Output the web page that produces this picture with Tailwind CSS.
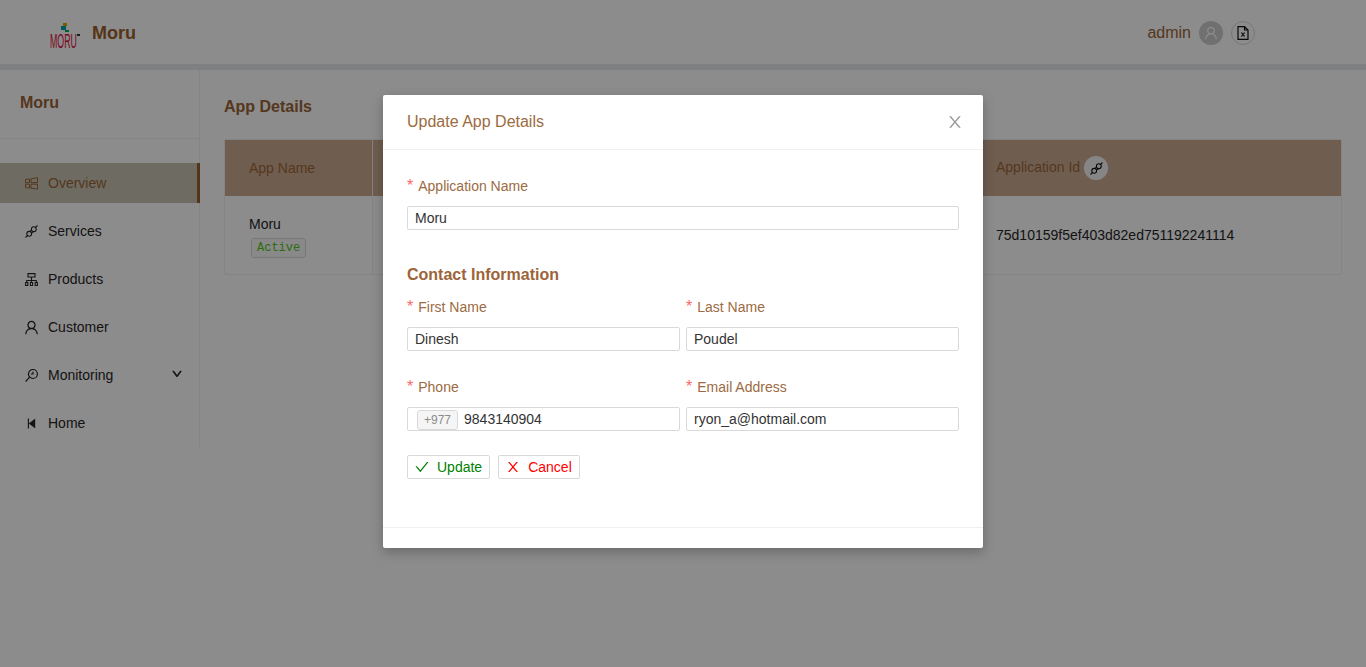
<!DOCTYPE html>
<html lang="en">
<head>
    <meta charset="UTF-8">
    <title>Moru - App Details</title>
    <script src="https://cdn.jsdelivr.net/npm/@tailwindcss/browser@4"></script>
</head>
<body class="bg-white font-['Liberation_Sans',sans-serif] text-sm text-[#262626]">
<div class="relative h-[667px] w-[1366px] overflow-hidden">

    <!-- header -->
    <header class="flex h-16 items-center pl-[50px] pr-[111px] pt-[2px]">
        <svg width="32" height="28" viewBox="0 0 32 28" class="mt-[21px] self-start">
            <rect x="13" y="0" width="4" height="3" fill="#d9a800"/>
            <rect x="11" y="3" width="5" height="4" fill="#00a0b0"/>
            <rect x="15" y="7" width="4" height="2" fill="#00b060"/>
            <text transform="translate(0 25) scale(.42 1)" font-family="Liberation Sans, sans-serif" font-size="21" fill="#e0103f">MORU</text>
            <rect x="27" y="11" width="3" height="2" fill="#333"/>
        </svg>
        <span class="ml-[10px] text-lg font-bold text-[#9c622a]">Moru</span>
        <div class="ml-auto flex items-center">
            <span class="text-base text-[#9c6438]">admin</span>
            <span class="ml-2 flex h-6 w-6 items-center justify-center rounded-full bg-[#ccc]">
                <svg width="14" height="14" viewBox="64 64 896 896" fill="#fff"><path d="M858.5 763.6a374 374 0 0 0-80.6-119.5 375.63 375.63 0 0 0-119.5-80.6c-.4-.2-.8-.3-1.2-.5C719.5 518 760 444.7 760 362c0-137-111-248-248-248S264 225 264 362c0 82.7 40.5 156 102.8 201.1-.4.2-.8.3-1.2.5-44.8 18.9-85 46-119.5 80.6a375.63 375.63 0 0 0-80.6 119.5A371.7 371.7 0 0 0 136 901.8a8 8 0 0 0 8 8.2h60c4.4 0 7.9-3.5 8-7.8 2-77.2 33-149.5 87.8-204.3 56.7-56.7 132-87.9 212.2-87.9s155.5 31.2 212.2 87.9C779 752.7 810 825 812 902.2c.1 4.4 3.6 7.8 8 7.8h60a8 8 0 0 0 8-8.2c-1-47.8-10.9-94.3-29.5-138.2zM512 534c-45.9 0-89.1-17.9-121.6-50.4S340 407.9 340 362c0-45.9 17.9-89.1 50.4-121.6S466.1 190 512 190s89.1 17.9 121.6 50.4S684 316.1 684 362c0 45.9-17.9 89.1-50.4 121.6S557.9 534 512 534z"/></svg>
            </span>
            <span class="ml-2 flex h-6 w-6 items-center justify-center rounded-full border border-[#d9d9d9]">
                <svg width="12" height="14" viewBox="0 0 12 14" fill="none" stroke="#111" stroke-width="1.2">
                    <path d="M1 .7h6.5L11 4v9.3H1z"/>
                    <path d="M7.5.7V4H11"/>
                    <path d="M4.4 6.5l3.2 4M7.6 6.5l-3.2 4"/>
                </svg>
            </span>
        </div>
    </header>
    <div class="h-[6px] bg-[#e7e9eb]"></div>

    <div class="flex">
        <!-- sidebar -->
        <aside class="h-[377px] w-[200px] shrink-0 border-r border-[#f0f0f0]">
            <div class="flex h-[69px] items-center border-b border-[#f0f0f0] pb-[2px] pl-5 text-base font-bold text-[#9c6438]">Moru</div>
            <nav class="mt-6 flex flex-col gap-2">
                <a class="-mr-px flex h-10 items-center gap-[10px] border-r-[3px] border-[#9c622a] bg-[#c8c4b2] pl-[25px] text-[#9c6438]">
                    <svg width="13" height="13" viewBox="0 0 13 13" fill="none" stroke="currentColor" stroke-width="1"><path d="M.5 2.5l4-.5v3.7h-4zM.5 7.2h4V11l-4-.5zM6 1.8L12.5.7v4.9H6zM6 7.2h6.5v5L6 11.2z"/></svg>
                    Overview
                </a>
                <a class="flex h-10 items-center gap-[10px] pl-[25px]">
                    <svg width="13" height="13" viewBox="0 0 13 13" fill="none" stroke="currentColor" stroke-width="1.1"><path d="M.5 12.5l2.2-2.2M10.3 2.7l2.2-2.2"/><circle cx="4.2" cy="8.8" r="2.4"/><circle cx="8.8" cy="4.2" r="2.4"/><path d="M5.3 6.2l1.2-1.2M7.2 7.8l1.2-1.2"/></svg>
                    Services
                </a>
                <a class="flex h-10 items-center gap-[10px] pl-[25px]">
                    <svg width="13" height="13" viewBox="0 0 13 13" fill="none" stroke="currentColor" stroke-width="1.1"><path d="M3 .6h7v3.4H3z"/><path d="M6.5 4v3.5M1.7 9V7.5h9.6V9M6.5 7.5V9"/><path d="M.6 9.5h2.2v3H.6zM5.4 9.5h2.2v3H5.4zM10.2 9.5h2.2v3h-2.2z"/></svg>
                    Products
                </a>
                <a class="flex h-10 items-center gap-[9px] pl-[24px]">
                    <svg width="15" height="15" viewBox="64 64 896 896" fill="currentColor"><path d="M858.5 763.6a374 374 0 0 0-80.6-119.5 375.63 375.63 0 0 0-119.5-80.6c-.4-.2-.8-.3-1.2-.5C719.5 518 760 444.7 760 362c0-137-111-248-248-248S264 225 264 362c0 82.7 40.5 156 102.8 201.1-.4.2-.8.3-1.2.5-44.8 18.9-85 46-119.5 80.6a375.63 375.63 0 0 0-80.6 119.5A371.7 371.7 0 0 0 136 901.8a8 8 0 0 0 8 8.2h60c4.4 0 7.9-3.5 8-7.8 2-77.2 33-149.5 87.8-204.3 56.7-56.7 132-87.9 212.2-87.9s155.5 31.2 212.2 87.9C779 752.7 810 825 812 902.2c.1 4.4 3.6 7.8 8 7.8h60a8 8 0 0 0 8-8.2c-1-47.8-10.9-94.3-29.5-138.2zM512 534c-45.9 0-89.1-17.9-121.6-50.4S340 407.9 340 362c0-45.9 17.9-89.1 50.4-121.6S466.1 190 512 190s89.1 17.9 121.6 50.4S684 316.1 684 362c0 45.9-17.9 89.1-50.4 121.6S557.9 534 512 534z"/></svg>
                    Customer
                </a>
                <a class="flex h-10 items-center gap-[10px] pl-[25px] pr-[17px]">
                    <svg width="13" height="13" viewBox="0 0 13 13" fill="none" stroke="currentColor" stroke-width="1.2"><circle cx="7.9" cy="5" r="4.5"/><path d="M4.6 8.2L.6 12.5M8 2.8V5H5.8"/></svg>
                    Monitoring
                    <svg class="-mt-[3px] ml-auto" width="10" height="10" viewBox="64 64 896 896" fill="currentColor"><path d="M884 256h-75c-5.1 0-9.9 2.5-12.9 6.6L512 654.2 227.9 262.6c-3-4.1-7.8-6.6-12.9-6.6h-75c-6.5 0-10.3 7.4-6.5 12.7l352.6 486.1c12.8 17.6 39 17.6 51.7 0l352.6-486.1c3.9-5.3.1-12.7-6.4-12.7z" stroke="currentColor" stroke-width="80"/></svg>
                </a>
                <a class="flex h-10 items-center gap-[10px] pl-[25px]">
                    <svg width="13" height="13" viewBox="64 64 896 896" fill="currentColor"><path d="M347.6 528.95l383.2 301.02c14.25 11.2 35.2 1.1 35.2-16.95V210.97c0-18.05-21-28.14-35.2-16.94L347.6 495.05a21.53 21.53 0 0 0 0 33.9M330 864h-64a8 8 0 0 1-8-8V168a8 8 0 0 1 8-8h64a8 8 0 0 1 8 8v688a8 8 0 0 1-8 8"/></svg>
                    Home
                </a>
            </nav>
        </aside>

        <!-- main -->
        <main class="flex-1 pl-6 pr-6">
            <h2 class="flex h-[69px] items-center pt-[5px] text-base font-bold text-[#9c6438]">App Details</h2>
            <div class="w-[1118px] rounded-[2px] border border-[#f0f0f0]">
                <div class="flex h-14 bg-[#caab90] text-[#9c6438]">
                    <div class="flex w-[148px] items-center border-r border-[#f0f0f0] pl-6">App Name</div>
                    <div class="flex-1"></div>
                    <div class="flex w-[369px] items-center pl-6">
                        <span class="-mt-[2px]">Application Id</span>
                        <span class="ml-[4px] flex h-6 w-6 items-center justify-center rounded-full bg-[#f5f5f5]">
                            <svg width="13" height="13" viewBox="0 0 13 13" fill="none" stroke="#111" stroke-width="1.1"><path d="M.5 12.5l2.2-2.2M10.3 2.7l2.2-2.2"/><circle cx="4.2" cy="8.8" r="2.4"/><circle cx="8.8" cy="4.2" r="2.4"/><path d="M5.3 6.2l1.2-1.2M7.2 7.8l1.2-1.2"/></svg>
                        </span>
                    </div>
                </div>
                <div class="flex h-[78px]">
                    <div class="w-[148px] border-r border-[#f0f0f0] pl-6 pt-[17px]">
                        <div class="leading-[22px]">Moru</div>
                        <span class="ml-[2px] mt-[3px] inline-flex h-5 items-center rounded-[3px] border border-[#d9d9d9] bg-[#fafafa] px-[5px] font-['Liberation_Mono',monospace] text-xs text-[#52c41a]">Active</span>
                    </div>
                    <div class="flex-1"></div>
                    <div class="flex w-[369px] items-center pl-6">75d10159f5ef403d82ed751192241114</div>
                </div>
            </div>
        </main>
    </div>

    <!-- overlay -->
    <div class="absolute inset-0 bg-black/45"></div>

    <!-- modal -->
    <div class="absolute left-[383px] top-[95px] h-[453px] w-[600px] rounded-[2px] bg-white shadow-[0_4px_12px_rgba(0,0,0,0.25)]">
        <div class="flex h-[55px] items-center justify-between border-b border-[#f0f0f0] pl-6 pr-5">
            <span class="text-base text-[#9c6b42]">Update App Details</span>
            <svg width="16" height="16" viewBox="64 64 896 896" fill="#999"><path d="M563.8 512l262.5-312.9c4.4-5.2.7-13.1-6.1-13.1h-79.8c-4.7 0-9.2 2.1-12.3 5.7L511.6 449.8 295.1 191.7c-3-3.6-7.5-5.7-12.3-5.7H203c-6.8 0-10.5 7.9-6.1 13.1L459.4 512 196.9 824.9A7.95 7.95 0 0 0 203 838h79.8c4.7 0 9.2-2.1 12.3-5.7l216.5-258.1 216.5 258.1c3 3.6 7.5 5.7 12.3 5.7h79.8c6.8 0 10.5-7.9 6.1-13.1L563.8 512z"/></svg>
        </div>
        <form class="h-[378px] border-b border-[#f0f0f0] px-6 pt-[25px]">
            <label class="flex h-[22px] items-center text-[#9c6b42]"><span class="mr-[5px] text-base text-[#ff6666]">*</span>Application Name</label>
            <input class="mt-[9px] block h-6 w-full rounded-[2px] border border-[#d9d9d9] px-[7px] text-[#333]" value="Moru">

            <h3 class="mt-[33px] text-base leading-6 font-bold text-[#9c6438]">Contact Information</h3>

            <div class="mt-[9px] grid grid-cols-2 gap-x-[6px] gap-y-[25px]">
                <div>
                    <label class="flex h-[22px] items-center text-[#9c6b42]"><span class="mr-[5px] text-base text-[#ff6666]">*</span>First Name</label>
                    <input class="mt-[9px] block h-6 w-full rounded-[2px] border border-[#d9d9d9] px-[7px] text-[#333]" value="Dinesh">
                </div>
                <div>
                    <label class="flex h-[22px] items-center text-[#9c6b42]"><span class="mr-[5px] text-base text-[#ff6666]">*</span>Last Name</label>
                    <input class="mt-[9px] block h-6 w-full rounded-[2px] border border-[#d9d9d9] px-[7px] text-[#333]" value="Poudel">
                </div>
                <div>
                    <label class="flex h-[22px] items-center text-[#9c6b42]"><span class="mr-[5px] text-base text-[#ff6666]">*</span>Phone</label>
                    <div class="mt-[9px] flex h-6 items-center rounded-[2px] border border-[#d9d9d9] pl-[9px]">
                        <span class="mt-[1px] flex h-5 items-center rounded-[3px] border border-[#d9d9d9] bg-[#f5f5f5] px-[6px] text-xs text-[#8c8c8c]">+977</span>
                        <input class="ml-[6px] min-w-0 flex-1 text-[#333] outline-none" value="9843140904">
                    </div>
                </div>
                <div>
                    <label class="flex h-[22px] items-center text-[#9c6b42]"><span class="mr-[5px] text-base text-[#ff6666]">*</span>Email Address</label>
                    <input class="mt-[9px] block h-6 w-full rounded-[2px] border border-[#d9d9d9] px-[7px] text-[#333]" value="ryon_a@hotmail.com">
                </div>
            </div>

            <div class="mt-6 flex gap-2">
                <button type="button" class="flex h-6 items-center gap-2 rounded-[2px] border border-[#d9d9d9] px-[7px] text-[#008000]">
                    <svg width="14" height="14" viewBox="64 64 896 896" fill="currentColor"><path d="M912 190h-69.9c-9.8 0-19.1 4.5-25.1 12.2L404.7 724.5 207 474a32 32 0 0 0-25.1-12.2H112c-6.7 0-10.4 7.7-6.3 12.9l273.9 347c12.8 16.2 37.4 16.2 50.3 0l488.4-618.9c4.1-5.1.4-12.8-6.3-12.8z"/></svg>
                    Update
                </button>
                <button type="button" class="flex h-6 items-center gap-2 rounded-[2px] border border-[#d9d9d9] px-[7px] text-[#ff0000]">
                    <svg width="14" height="14" viewBox="64 64 896 896" fill="currentColor"><path d="M563.8 512l262.5-312.9c4.4-5.2.7-13.1-6.1-13.1h-79.8c-4.7 0-9.2 2.1-12.3 5.7L511.6 449.8 295.1 191.7c-3-3.6-7.5-5.7-12.3-5.7H203c-6.8 0-10.5 7.9-6.1 13.1L459.4 512 196.9 824.9A7.95 7.95 0 0 0 203 838h79.8c4.7 0 9.2-2.1 12.3-5.7l216.5-258.1 216.5 258.1c3 3.6 7.5 5.7 12.3 5.7h79.8c6.8 0 10.5-7.9 6.1-13.1L563.8 512z"/></svg>
                    Cancel
                </button>
            </div>
        </form>
    </div>
</div>
</body>
</html>
